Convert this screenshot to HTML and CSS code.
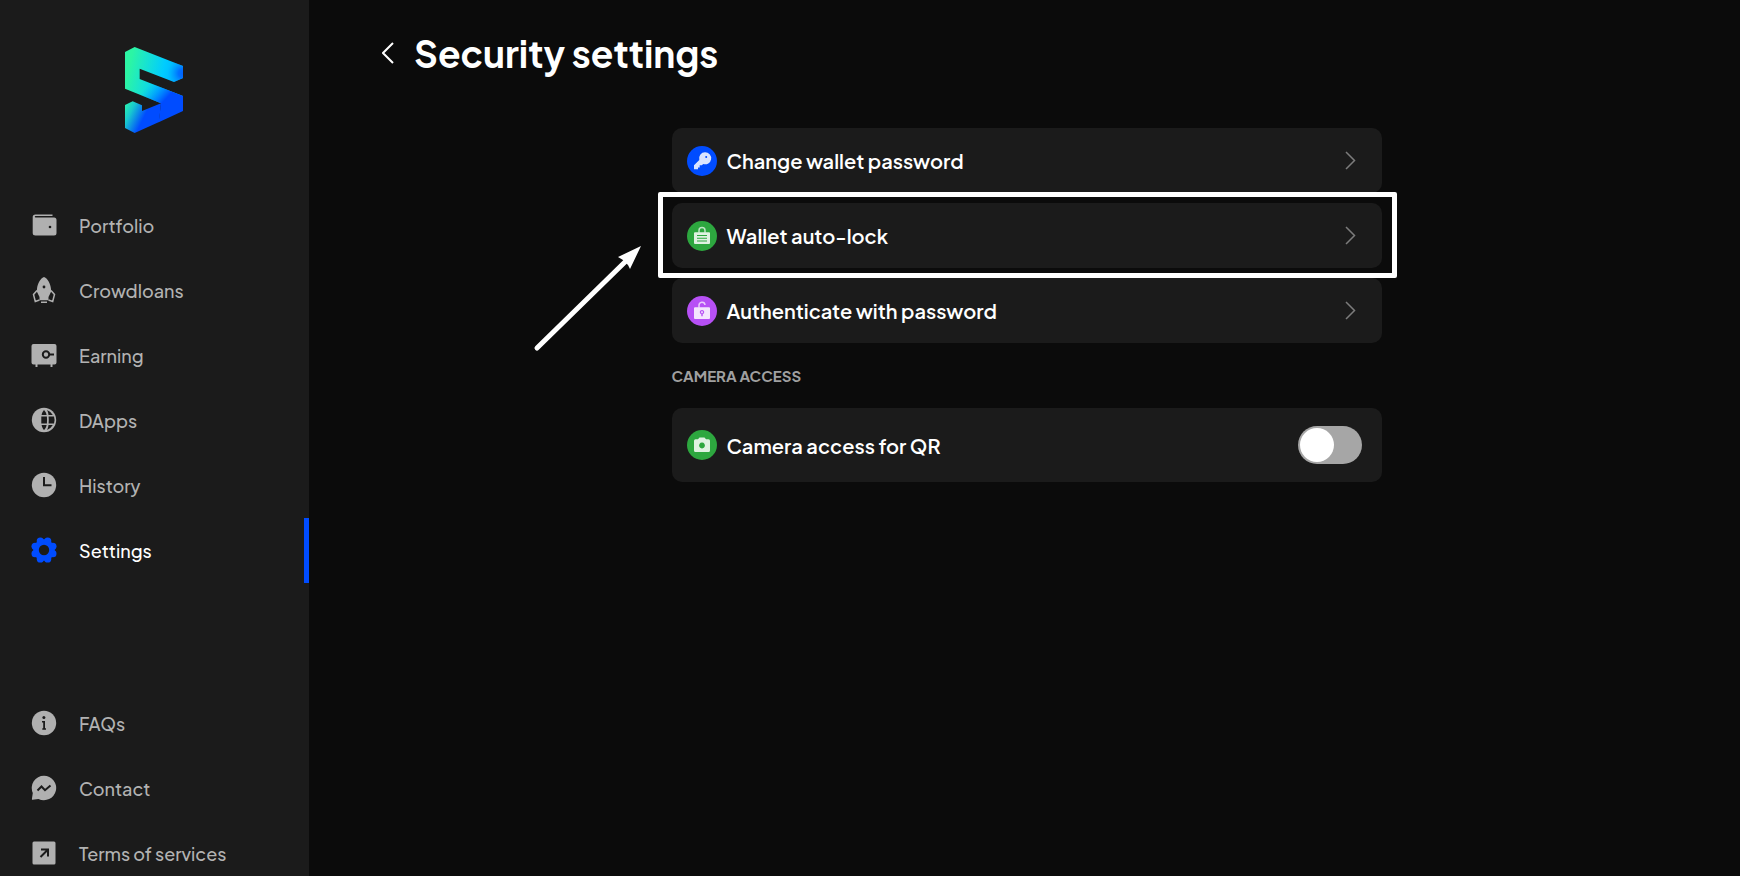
FILE: index.html
```html
<!DOCTYPE html>
<html lang="en">
<head>
<meta charset="utf-8">
<meta name="viewport" content="width=device-width, initial-scale=1">
<title>Security settings</title>
<link rel="stylesheet" href="styles.css">
</head>
<body>
<div class="app">
  <aside class="sidebar">
    <a class="logo" href="#" aria-label="Home">
      <svg viewBox="75 51 174 258" width="58" height="86" aria-hidden="true">
        <defs>
          <linearGradient id="base" gradientUnits="userSpaceOnUse" x1="85" y1="120" x2="225" y2="150">
            <stop offset="0" stop-color="#2cf5a4"/>
            <stop offset="0.3" stop-color="#1ae5cc"/>
            <stop offset="0.72" stop-color="#00ccff"/>
            <stop offset="1" stop-color="#00b4ff"/>
          </linearGradient>
          <radialGradient id="tip" gradientUnits="userSpaceOnUse" cx="249" cy="130" r="46">
            <stop offset="0" stop-color="#0062ff"/>
            <stop offset="0.3" stop-color="#0070ff"/>
            <stop offset="1" stop-color="#00a0ff" stop-opacity="0"/>
          </radialGradient>
          <linearGradient id="low" gradientUnits="userSpaceOnUse" x1="150" y1="160" x2="225" y2="230">
            <stop offset="0" stop-color="#00a0ff" stop-opacity="0"/>
            <stop offset="0.65" stop-color="#004cff"/>
          </linearGradient>
          <linearGradient id="foot" gradientUnits="userSpaceOnUse" x1="75" y1="235" x2="138" y2="265">
            <stop offset="0" stop-color="#26eab4"/>
            <stop offset="0.3" stop-color="#18c8cf"/>
            <stop offset="0.9" stop-color="#004cff"/>
          </linearGradient>
        </defs>
        <path fill="url(#base)" d="M75 66 104 51 249 108V144L222 156 119 116V147L249 198V243L183 220 75 176Z"/>
        <path fill="url(#tip)" d="M104 51 249 108V144L222 156 119 116Z"/>
        <path fill="url(#low)" d="M119 147 249 198V243L176 277 183 220 75 176Z"/>
        <path fill="url(#foot)" d="M75 225 98 214 126 226V243L183 220 177 276 104 309 75 294Z"/>
      </svg>
    </a>
    <nav class="menu" aria-label="Main">
      <a class="menu-item" href="#">
        <svg class="menu-icon" viewBox="0 0 26 26" aria-hidden="true"><path d="M4.500 2.500H21.500V4H4.500Q3.800 4 3.800 4.800 3.800 5.500 4.500 5.500H23Q25.500 5.500 25.500 8V21Q25.500 23.500 23 23.500H4.500Q1.700 23.500 1.700 21V5Q1.700 2.500 4.500 2.500Z"/><circle class="hole" cx="19" cy="15" r="1.300"/></svg>
        Portfolio
      </a>
      <a class="menu-item" href="#">
        <svg class="menu-icon" viewBox="0 0 26 26" aria-hidden="true"><path d="M13 0C9 1.500 6.500 7 6 12 5.800 15 5 17.500 5 20 5 22.300 6.500 23.300 8.500 23.300H17.500C19.500 23.300 21 22.300 21 20 21 17.500 20.200 15 20 12 19.500 7 17 1.500 13 0Z"/><circle class="hole" cx="13" cy="10" r="1.400"/><path class="hole" d="M5.800 14.500 8.500 20V24H5L3.500 17ZM20.200 14.500 17.500 20V24H21L22.500 17Z"/><path class="line" d="M6 13.500 2.500 17.500 4.300 24.500 8.500 23M20 13.500 23.500 17.500 21.700 24.500 17.500 23M10 25.300H16"/></svg>
        Crowdloans
      </a>
      <a class="menu-item" href="#">
        <svg class="menu-icon" viewBox="0 0 26 26" aria-hidden="true"><path d="M2.500 2H23.500Q25.500 2 25.500 4V20.500Q25.500 22.500 23.500 22.500H21.500V25H19.500V22.500H6.500V25H4.500V22.500H2.500Q.5 22.500 .5 20.500V4Q.5 2 2.500 2Z"/><circle class="cut" cx="15" cy="12.500" r="3.200"/><path class="cut" d="M18.500 12.500H23"/></svg>
        Earning
      </a>
      <a class="menu-item" href="#">
        <svg class="menu-icon" viewBox="0 0 26 26" aria-hidden="true"><circle cx="13" cy="13" r="12.200"/><path class="hole" d="M13 3C11.700 4.500 11 6 10.600 8H15.600C15.200 6 14.500 4.500 13 3ZM10.300 9.500V16.500H15.900Q16.200 13 15.900 9.500ZM10.600 18C11 20 11.700 21.600 13 23 14.500 21.600 15.200 20 15.600 18ZM16 3C17 4.700 17.300 6.300 17.500 8H21.800Q19.800 4.500 16 3ZM17.600 9.500Q18 13 17.600 16.500H23Q24.200 13 23 9.500ZM17.500 18C17.200 20 16.800 21.600 16 23Q19.800 21.500 21.800 18Z"/></svg>
        DApps
      </a>
      <a class="menu-item" href="#">
        <svg class="menu-icon" viewBox="0 0 26 26" aria-hidden="true"><circle cx="13" cy="13" r="12.200"/><path class="cut" d="M13 5V13.200H20.500"/></svg>
        History
      </a>
      <a class="menu-item active" href="#" aria-current="page">
        <svg class="menu-icon" viewBox="0 0 26 26" aria-hidden="true"><circle cx="13" cy="13" r="10.700"/><circle cx="9.300" cy="4.100" r="3.600"/><circle cx="16.700" cy="4.100" r="3.600"/><circle cx="21.900" cy="9.300" r="3.600"/><circle cx="21.900" cy="16.700" r="3.600"/><circle cx="16.700" cy="21.900" r="3.600"/><circle cx="9.300" cy="21.900" r="3.600"/><circle cx="4.100" cy="16.700" r="3.600"/><circle cx="4.100" cy="9.300" r="3.600"/><circle class="hole" cx="13" cy="13" r="5.200"/></svg>
        Settings
      </a>
    </nav>
    <nav class="menu" aria-label="Help">
      <a class="menu-item" href="#">
        <svg class="menu-icon" viewBox="0 0 26 26" aria-hidden="true"><circle cx="13" cy="13" r="12.200"/><circle class="hole" cx="12.900" cy="7.600" r="1.500"/><path class="hole" d="M11 11H14V18.300H15V19.800H11.300V18.300H12.200V12.500H11Z"/></svg>
        FAQs
      </a>
      <a class="menu-item" href="#">
        <svg class="menu-icon" viewBox="0 0 26 26" aria-hidden="true"><path d="M13 .8A12.200 12.200 0 1 1 7.500 23.900L1.500 24.800Q.8 24.800 .9 24L1.800 18A12.200 12.200 0 0 1 13 .8Z"/><path class="cut" d="M6.500 15.500 10.500 11.500 14 15.200 19.500 10.500"/></svg>
        Contact
      </a>
      <a class="menu-item" href="#">
        <svg class="menu-icon" viewBox="0 0 26 26" aria-hidden="true"><rect x="1.500" y="1.500" width="23" height="23" rx="1.500"/><path class="cut" d="M9.500 17 16.300 10.200M10 9.500H17V16.500"/></svg>
        Terms of services
      </a>
    </nav>
  </aside>

  <main class="content">
    <header class="page-head">
      <button class="back" type="button" aria-label="Back">
        <svg viewBox="0 0 12 22" width="12" height="22" aria-hidden="true"><path d="M11 1 1 11 11 21"/></svg>
      </button>
      <h1>Security settings</h1>
    </header>

    <div class="panel">
      <ul class="options">
        <li>
          <button class="card" type="button">
            <svg class="badge blue" viewBox="0 0 30 30" aria-hidden="true"><path fill-rule="evenodd" d="M18 6.300A6 6 0 1 1 16.300 18L14.800 19.300H12.700V21.400H11V23.200H7V19.300L12.300 14A6 6 0 0 1 18 6.300ZM19.200 10A1 1 0 1 0 19.210 12 1 1 0 0 0 19.200 10Z"/></svg>
            <span>Change wallet password</span>
            <svg class="chevron" viewBox="0 0 11 19" aria-hidden="true"><path d="M1 1 9.500 9.500 1 18"/></svg>
          </button>
        </li>
        <li class="marked">
          <button class="card" type="button">
            <svg class="badge green" viewBox="0 0 30 30" aria-hidden="true"><path class="shackle" d="M12 11.500V9.500A3 3 0 0 1 18 9.500V11.500"/><path fill-rule="evenodd" d="M8 11.200H22Q23 11.200 23 12.200V22Q23 23 22 23H8Q7 23 7 22V12.200Q7 11.200 8 11.200ZM10 14V15H20V14ZM10 16.700V17.700H20V16.700ZM10 19.400V20.400H20V19.400Z"/></svg>
            <span>Wallet auto-lock</span>
            <svg class="chevron" viewBox="0 0 11 19" aria-hidden="true"><path d="M1 1 9.500 9.500 1 18"/></svg>
          </button>
          <span class="frame"></span>
          <svg class="arrow" viewBox="0 0 112 110" aria-hidden="true"><path class="shaft" d="M5 105 95 17"/><path d="M109 3 86 14 91 17 96 22 98 26Z"/></svg>
        </li>
        <li>
          <button class="card" type="button">
            <svg class="badge purple" viewBox="0 0 30 30" aria-hidden="true"><path class="shackle" d="M12 11.500V9.500A3 3 0 0 1 18 9"/><path fill-rule="evenodd" d="M8 11.200H22Q23 11.200 23 12.200V22Q23 23 22 23H8Q7 23 7 22V12.200Q7 11.200 8 11.200ZM15 14A2.200 2.200 0 0 0 14.300 18.300V20.300H15.700V18.300A2.200 2.200 0 0 0 15 14ZM15 15.300A.9 .9 0 1 1 14.990 15.300Z"/></svg>
            <span>Authenticate with password</span>
            <svg class="chevron" viewBox="0 0 11 19" aria-hidden="true"><path d="M1 1 9.500 9.500 1 18"/></svg>
          </button>
        </li>
      </ul>
      <h2>CAMERA ACCESS</h2>
      <label class="card tall">
        <svg class="badge green" viewBox="0 0 30 30" aria-hidden="true"><path fill-rule="evenodd" d="M12.500 7.500H17.500L19 9.300H21.500Q23 9.300 23 10.800V20.500Q23 22 21.500 22H8.500Q7 22 7 20.500V10.800Q7 9.300 8.500 9.300H11ZM15 12.600A2.900 2.900 0 1 0 15.010 12.600Z"/></svg>
        <span>Camera access for QR</span>
        <input class="switch" type="checkbox" role="switch">
      </label>
    </div>
  </main>
</div>
</body>
</html>
```

FILE: styles.css
```css
* {
  box-sizing: border-box;
}

body {
  margin: 0;
  background: #0b0b0b;
  color: #fff;
  font-family: "Plus Jakarta Sans", Inter, "Open Sans", sans-serif;
}

button {
  border: 0;
  background: none;
  color: inherit;
  font: inherit;
  cursor: pointer;
}

.app {
  display: flex;
  height: 100vh;
  overflow: hidden;
}

/* Sidebar */

.sidebar {
  flex: 0 0 309px;
  display: flex;
  flex-direction: column;
  gap: 60px;
  padding-top: 47px;
  background: #1b1b1b;
}

.logo {
  align-self: flex-start;
  margin-left: 125px;
}

.logo svg {
  display: block;
}

.menu {
  display: flex;
  flex-direction: column;
}

.menu + .menu {
  margin-top: 48px;
}

.menu-item {
  display: flex;
  align-items: center;
  gap: 22px;
  height: 65px;
  flex: none;
  padding: 0 0 1px 31px;
  border-right: 5px solid transparent;
  color: #b2b2b2;
  font-size: 18px;
  font-weight: 500;
  text-decoration: none;
}

.menu-item.active {
  border-color: #004cff;
  color: #fff;
}

.menu-icon {
  width: 26px;
  height: 26px;
  fill: #b0b0b0;
}

.active .menu-icon {
  fill: #004cff;
}

.menu-icon .hole {
  fill: #1b1b1b;
}

.menu-icon .cut {
  fill: none;
  stroke: #1b1b1b;
  stroke-width: 2;
}

.menu-icon .line {
  fill: none;
  stroke: #b0b0b0;
  stroke-width: 1.5;
}

/* Content */

.content {
  flex: 1;
  padding: 25px 69px 0 73px;
}

.page-head {
  display: flex;
  align-items: center;
  gap: 20px;
  height: 56px;
}

.back {
  display: flex;
  padding: 0;
}

.back path {
  fill: none;
  stroke: #fff;
  stroke-width: 2;
}

h1 {
  margin: 0;
  font-size: 37px;
  font-weight: 700;
}

.panel {
  max-width: 710px;
  margin: 47px auto 0;
}

.options {
  display: flex;
  flex-direction: column;
  gap: 10px;
  margin: 0;
  padding: 0;
  list-style: none;
}

.card {
  display: flex;
  align-items: center;
  gap: 10px;
  width: 100%;
  height: 65px;
  padding: 0 20px 0 15px;
  border-radius: 10px;
  background: #1b1b1b;
  font-size: 20px;
  font-weight: 600;
  text-align: left;
}

.card.tall {
  height: 74px;
}

.card span {
  flex: 1;
}

.badge {
  width: 30px;
  height: 30px;
  border-radius: 50%;
  fill: #fff;
  fill-opacity: 0.85;
}

.badge .shackle {
  fill: none;
  stroke: #fff;
  stroke-opacity: 0.7;
  stroke-width: 1.5;
}

.blue {
  background: #004cff;
}

.green {
  background: #2da73f;
}

.purple {
  background: #b750f5;
}

.chevron {
  width: 11px;
  height: 19px;
  margin-right: 6px;
  fill: none;
  stroke: #7c7c7c;
  stroke-width: 1.5;
}

.marked {
  position: relative;
}

.frame {
  position: absolute;
  z-index: 1;
  inset: -11px -15px -10px -14px;
  border: 5px solid #fff;
  border-radius: 2px;
  pointer-events: none;
}

.arrow {
  position: absolute;
  top: 40px;
  left: -140px;
  width: 112px;
  height: 110px;
  fill: #fff;
  pointer-events: none;
}

.arrow .shaft {
  stroke: #fff;
  stroke-width: 5;
  stroke-linecap: round;
}

h2 {
  margin: 22px 0;
  color: #a0a0a0;
  font-size: 15px;
  font-weight: 700;
  line-height: 21px;
}

.switch {
  appearance: none;
  display: flex;
  align-items: center;
  width: 64px;
  height: 38px;
  margin: 0;
  padding: 0 2px;
  border-radius: 19px;
  background: #a6a6a6;
  cursor: pointer;
}

.switch::before {
  content: "";
  width: 34px;
  height: 34px;
  border-radius: 50%;
  background: #fff;
}

.switch:checked {
  background: #004cff;
}

.switch:checked::before {
  margin-left: auto;
}
```
